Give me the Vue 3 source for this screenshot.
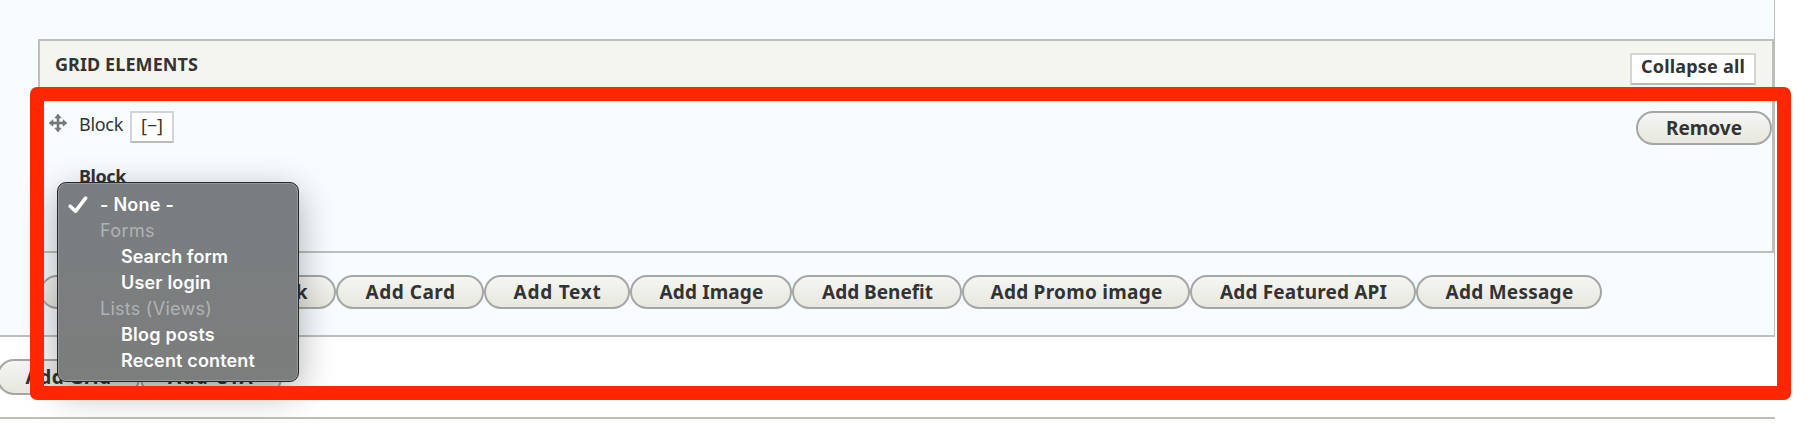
<script setup>
// Spreads a label's letters so that it fills the given width.
const vFit = {
  mounted(el, { value }) {
    const natural = el.getBoundingClientRect().width
    const count = el.textContent.length
    el.style.letterSpacing = (value - natural) / count + 'px'
  }
}

const addButtons = [
  { label: '', width: 141, text: 0 },
  { label: 'Add Block', width: 155, text: 98 },
  { label: 'Add Card', width: 148, text: 90 },
  { label: 'Add Text', width: 146, text: 88 },
  { label: 'Add Image', width: 162, text: 104 },
  { label: 'Add Benefit', width: 170, text: 111 },
  { label: 'Add Promo image', width: 228, text: 172 },
  { label: 'Add Featured API', width: 226, text: 167 },
  { label: 'Add Message', width: 186, text: 128 }
]

const options = [
  { label: '- None -', kind: 'option', text: 74, checked: true },
  { label: 'Forms', kind: 'group', text: 55 },
  { label: 'Search form', kind: 'child', text: 107 },
  { label: 'User login', kind: 'child', text: 90 },
  { label: 'Lists (Views)', kind: 'group', text: 112 },
  { label: 'Blog posts', kind: 'child', text: 94 },
  { label: 'Recent content', kind: 'child', text: 134 }
]
</script>

<template>
  <div class="page">
    <section class="panel">
      <div class="fieldset">
        <header class="head">
          <h2 class="title"><span v-fit="143">GRID ELEMENTS</span></h2>
          <button class="collapse"><span v-fit="104">Collapse all</span></button>
        </header>
        <div class="row">
          <div class="row-top">
            <svg class="drag" width="18" height="18" viewBox="0 0 18 18">
              <path d="M9 0 12.2 4H10V8H14V5.8L18 9l-4 3.2V10H10v4h2.2L9 18 5.8 14H8V10H4v2.2L0 9 4 5.8V8H8V4H5.8Z" fill="#777" stroke="#777" stroke-width=".6" />
            </svg>
            <span class="name"><span v-fit="44">Block</span></span>
            <button class="toggle"><span v-fit="22">[−]</span></button>
            <button class="pill remove"><span v-fit="76">Remove</span></button>
          </div>
          <label class="field"><span v-fit="47">Block</span></label>
        </div>
      </div>
      <div class="actions">
        <button v-for="b in addButtons" :key="b.label" class="pill" :style="{ width: b.width + 'px' }">
          <span v-if="b.label" v-fit="b.text">{{ b.label }}</span>
        </button>
      </div>
    </section>
    <section class="bottom">
      <button class="pill large"><span v-fit="86">Add Grid</span></button>
      <button class="pill large"><span v-fit="86">Add CTA</span></button>
    </section>

    <ul class="menu">
      <li v-for="o in options" :key="o.label" :class="o.kind">
        <svg v-if="o.checked" class="check" width="20" height="18" viewBox="0 0 20 18">
          <path d="M2.2 10.2 7.6 15.2 17.6 2.2" fill="none" stroke="#fff" stroke-width="3.6" stroke-linecap="round" stroke-linejoin="round" />
        </svg>
        <span v-fit="o.text">{{ o.label }}</span>
      </li>
    </ul>
    <div class="highlight"></div>
  </div>
</template>

<style>
body { margin: 0; background: #fff; }
</style>

<style scoped>
.page {
  position: relative;
  width: 1815px;
  height: 423px;
  overflow: hidden;
  background: #fff;
  color: #333;
  font-family: "Noto Sans", "Open Sans", sans-serif;
}
.page * { box-sizing: border-box; }
span { display: inline-block; white-space: pre; }
.panel {
  width: 1775px;
  height: 337px;
  padding: 39px 0 0 38px;
  background: #f6fcff;
  border-right: 1px solid #bebfb9;
  border-bottom: 2px solid #bebfb9;
}
.fieldset {
  height: 214px;
  border: 2px solid #bebfb9;
}
.head {
  display: flex;
  justify-content: space-between;
  align-items: flex-start;
  height: 54px;
  padding: 12px 16px 0 15px;
  background: #f5f5f0;
}
.title {
  margin: -1px 0 0;
  font-size: 18px;
  line-height: 24px;
  font-weight: 700;
}
button {
  margin: 0;
  padding: 0;
  font-family: inherit;
  font-weight: 700;
  color: #333;
}
.collapse, .toggle {
  height: 32px;
  background: #fff;
  border: 2px solid #d5d5d5;
  border-bottom-color: #bbb;
}
.collapse { width: 126px; font-size: 18px; line-height: 22px; padding-bottom: 6px; }
.row-top {
  display: flex;
  align-items: flex-start;
  padding: 16px 0 0 9px;
}
.drag { margin-top: 3px; }
.name { margin-left: 12px; font-size: 18px; line-height: 26px; width: 51px; }
.toggle { width: 44px; font-size: 18px; font-weight: 400; line-height: 20px; padding-bottom: 5px; }
.field {
  display: block;
  margin: 18px 0 0 39px;
  font-size: 18px;
  line-height: 26px;
  font-weight: 700;
}
.pill {
  flex: none;
  height: 34px;
  border: 2px solid #a6a6a6;
  border-radius: 17px;
  background: linear-gradient(#f5f6f2, #e7e7df);
  font-size: 19px;
  line-height: 28px;
  text-align: center;
}
.actions .pill { padding-left: 1px; }
.remove { width: 136px; margin-left: auto; }
.actions {
  display: flex;
  padding: 22px 0 0 2px;
}
.bottom {
  display: flex;
  width: 1775px;
  height: 82px;
  padding-top: 22px;
  border-bottom: 2px solid #bebfb9;
}
.bottom .pill { width: 142px; height: 36px; }
.bottom .pill:first-child { margin-left: -3px; width: 143px; }
.menu {
  position: absolute;
  left: 57px;
  top: 182px;
  width: 242px;
  height: 200px;
  margin: 0;
  padding: 8px 0 0 42px;
  list-style: none;
  border: 1px solid #25282a;
  border-radius: 9px;
  background: linear-gradient(#787d82, #7b7e7f 50%, #7c7d7d);
  box-shadow: inset 0 0 0 1px #96999b, 0 10px 36px rgba(0, 0, 0, .32);
  color: #fff;
  font-family: Inter, sans-serif;
  font-size: 18px;
  font-weight: 600;
}
.menu li {
  display: flex;
  align-items: center;
  height: 26px;
}
.menu .group { color: #b0b3b4; font-weight: 400; }
.menu .child { padding-left: 21px; }
.check { margin: 2px 12px 0 -32px; }
.highlight {
  position: absolute;
  left: 30px;
  top: 87px;
  width: 1761px;
  height: 313px;
  border: 14px solid #ff2600;
  border-radius: 7px;
}
</style>
